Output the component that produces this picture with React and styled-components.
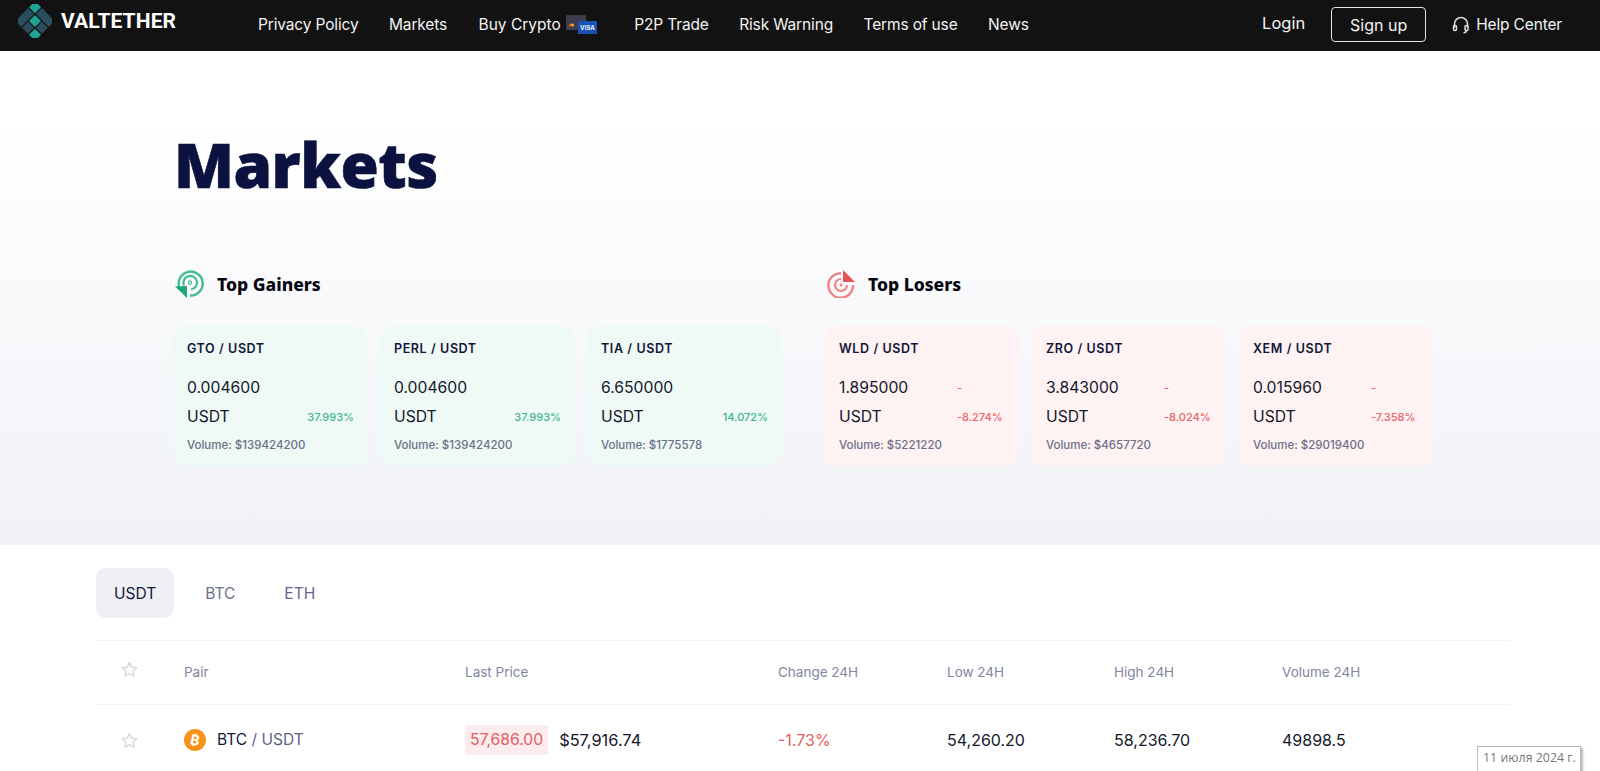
import React from "react";
import styled, { createGlobalStyle } from "styled-components";

const Global = createGlobalStyle`
  html, body { margin: 0; padding: 0; background: #fff; }
  body { font-family: Inter, "Liberation Sans", sans-serif; overflow: hidden; }
  * { box-sizing: border-box; }
`;
const Page = styled.div`position: relative; height: 771px; overflow: hidden;`;
const Header = styled.header`
  height: 51px; background: #121212; display: flex; align-items: center; color: #f2f2f2;
  padding: 0 38px 2px 18px; font-size: 15.5px;
`;
const Brand = styled.div`display: flex; align-items: center; gap: 9px; width: 240px; margin-top: -7px;`;
const BrandName = styled.span`font: 700 21px Roboto, sans-serif; color: #fff; letter-spacing: .1px;`;
const Nav = styled.nav`display: flex; align-items: center; gap: 30.5px; flex: 1; font: 400 15.5px Inter, sans-serif;`;
const NavItem = styled.a`display: flex; align-items: center; gap: 5px; white-space: nowrap; letter-spacing: -.15px;`;
const BuyItem = styled(NavItem)`margin-left: 1px; letter-spacing: 0; margin-right: 7px;`;
const Actions = styled.div`display: flex; align-items: center;`;
const Login = styled.a`font-size: 16.5px; margin-right: 26px; margin-top: -3px;`;
const SignUp = styled.a`
  width: 95px; height: 35px; border: 1px solid #e4e4e4; border-radius: 4px; display: flex;
  align-items: center; justify-content: center; font-size: 16px; margin-right: 26px;
`;
const Help = styled.a`display: flex; align-items: center; gap: 6px; font-size: 15.5px; letter-spacing: -.15px;`;

const Hero = styled.section`
  height: 494px; padding: 71px 0 0 173px;
  background: linear-gradient(180deg, #ffffff 14%, #f1f2f7 100%);
`;
const Title = styled.h1`
  margin: 0 0 64px 1px; font: 900 62px/84px "Noto Sans", sans-serif; color: #0b1240;
  letter-spacing: -.5px; -webkit-text-stroke: .6px #0b1240;
`;
const Groups = styled.div`display: flex; gap: 44px;`;
const Group = styled.div`width: 608px;`;
const GroupHead = styled.div`
  display: flex; align-items: center; gap: 13px; height: 28px; margin-bottom: 28px; padding-left: 2px;
`;
const GroupTitle = styled.h2`margin: 0; font: 800 17.5px "Noto Sans", sans-serif; color: #05060f;`;
const Cards = styled.div`display: grid; grid-template-columns: repeat(3, 194px); gap: 13px;`;
const Card = styled.div`
  height: 140px; border-radius: 12px; padding: 15px 13px 0 14px;
  background: ${p => (p.$up ? "#eff9f5" : "#fef2f3")};
`;
const CardPair = styled.div`font: 600 12.5px/16px Inter, sans-serif; color: #12163a; letter-spacing: .6px; margin-bottom: 16px;`;
const Quote = styled.div`
  display: grid; grid-template-columns: 118px 1fr; grid-auto-rows: 29px; align-items: center;
  font: 400 15.7px Inter, sans-serif; color: #14172c;
`;
const Change = styled.span`
  font: 500 11px Inter, sans-serif; color: ${p => (p.$up ? "#3fb68b" : "#e8636a")};
  text-align: ${p => (p.$up ? "right" : "left")};
`;
const Volume = styled.div`font: 500 11.5px Inter, sans-serif; color: #6c7088; margin-top: 7px;`;

const Market = styled.section`padding: 23px 90px 0 96px;`;
const Tabs = styled.div`display: flex; gap: 13px; margin-bottom: 22px;`;
const Tab = styled.button`
  height: 50px; padding: 0 18px; border: 0; border-radius: 10px; font: 400 15.5px Inter, sans-serif;
  background: ${p => (p.$active ? "#eef0f6" : "transparent")};
  color: ${p => (p.$active ? "#14193a" : p.$color)};
`;
const Row = styled.div`
  display: grid; grid-template-columns: 63px 281px 313px 169px 167px 168px 1fr; align-items: center;
  height: ${p => (p.$head ? "64px" : "70px")}; border-top: 1px solid #f3f4f7; padding-left: 25px;
`;
const StarSlot = styled.span`display: flex; margin-bottom: ${p => (p.$head ? "7px" : "0")};`;
const Head = styled.span`font: 400 13.5px Inter, sans-serif; color: #7f86a0; margin-bottom: 1px;`;
const PairCell = styled.div`display: flex; align-items: center; gap: 11px; font-size: 15.5px; color: #14193a;`;
const Quoted = styled.span`color: #5b6289;`;
const PriceCell = styled.div`display: flex; align-items: center; gap: 11px; font-size: 16.4px; color: #14172c;`;
const Flash = styled.span`
  height: 30px; padding: 0 5px; display: flex; align-items: center; background: #fdeced; color: #e35d62; font-size: 15.7px;
`;
const Neg = styled.span`font-size: 16px; color: #e35d62;`;
const Num = styled.span`font-size: 16px; color: #14172c;`;
const DateTip = styled.div`
  position: absolute; left: 1477px; top: 746px; width: 104px; height: 30px; background: #fff;
  border: 1px solid #b9b9b9; box-shadow: 2px 2px 2px #bbb; padding: 2px 0 0 5px;
  font: 400 12.4px "Open Sans", sans-serif; color: #777; white-space: nowrap;
`;

const Logo = () => (
  <svg width="34" height="34" viewBox="0 0 34 34">
    <g transform="rotate(45 17 17)">
      <rect x="3" y="3" width="8.5" height="8.5" fill="#1ea597" />
      <rect x="12.7" y="12.7" width="8.5" height="8.5" fill="#1ea597" />
      <rect x="22.5" y="22.500" width="8.5" height="8.5" fill="#1ea597" />
      <rect x="12.7" y="3" width="18.3" height="8.5" fill="#2b4d60" />
      <rect x="22.5" y="12.7" width="8.5" height="8.5" fill="#2b4d60" />
      <rect x="3" y="12.7" width="8.5" height="18.3" fill="#2b4d60" />
      <rect x="12.7" y="22.5" width="8.5" height="8.5" fill="#2b4d60" />
    </g>
  </svg>
);
const CardsIcon = () => (
  <svg width="31" height="20" viewBox="0 0 31 20">
    <rect x="0" y="0" width="20" height="15" rx="1" fill="#3b3e4d" />
    <circle cx="4.5" cy="10" r="1.6" fill="#e4572e" />
    <circle cx="6.5" cy="10" r="1.6" fill="#f5a623" />
    <rect x="12" y="6" width="19" height="13" fill="#1a4fb5" />
    <text x="21.5" y="15" textAnchor="middle" fontSize="6" fontWeight="800" fill="#dfe8fa" fontFamily="Inter">VISA</text>
  </svg>
);
const Headset = () => (
  <svg width="18" height="18" viewBox="0 0 18 18" fill="none" stroke="#dcdcdc" strokeWidth="1.5">
    <path d="M2.5 12V8a6.5 6.500 0 0 1 13 0v4" />
    <rect x="1.5" y="9.5" width="3" height="5" rx="1.2" />
    <rect x="13" y="9.5" width="3" height="5" rx="1.2" />
    <path d="M14.5 14.5c0 1.5-1 2.2-3 2.2" />
  </svg>
);
const GainIcon = () => (
  <svg width="29" height="28" viewBox="0 0 29 28" fill="none">
    <path d="M5 19A12 12 0 1 1 15 25.500" stroke="#42bd93" strokeWidth="2.4" />
    <path d="M9 15.500A6.800 6.800 0 1 1 16 19.500" stroke="#42bd93" strokeWidth="2.2" />
    <circle cx="15" cy="12.500" r="1.600" stroke="#42bd93" strokeWidth="1.2" />
    <path d="M0 16.500L12 16v12z" fill="#1fa873" />
  </svg>
);
const LoseIcon = () => (
  <svg width="28" height="28" viewBox="0 0 28 28" fill="none">
    <path d="M14 3.200A12.300 12.300 0 1 0 26 15" stroke="#ef8489" strokeWidth="2.4" />
    <path d="M14 9A6 6 0 1 0 20 15" stroke="#ef8489" strokeWidth="2.2" />
    <circle cx="14" cy="15" r="1.5" fill="#ef8489" />
    <path d="M16 0L28 12H16z" fill="#e4545a" />
  </svg>
);
const Star = () => (
  <svg width="17" height="16" viewBox="0 0 24 23" fill="none" stroke="#d5d8e2" strokeWidth="2" strokeLinejoin="round">
    <path d="M12 2l3 6.800 7.400.8-5.500 5 1.600 7.300L12 18.200l-6.500 3.700L7.100 14.600l-5.500-5 7.400-.8z" />
  </svg>
);
const BtcCoin = () => (
  <svg width="22" height="22" viewBox="0 0 22 22">
    <circle cx="11" cy="11" r="11" fill="#f7931a" />
    <text x="11" y="16" textAnchor="middle" fontSize="14" fontWeight="700" fill="#fff" fontFamily="Inter" transform="rotate(12 11 11)">₿</text>
  </svg>
);

const gainers = [
  ["GTO / USDT", "0.004600", "37.993%", "$139424200"],
  ["PERL / USDT", "0.004600", "37.993%", "$139424200"],
  ["TIA / USDT", "6.650000", "14.072%", "$1775578"],
];
const losers = [
  ["WLD / USDT", "1.895000", "-8.274%", "$5221220"],
  ["ZRO / USDT", "3.843000", "-8.024%", "$4657720"],
  ["XEM / USDT", "0.015960", "-7.358%", "$29019400"],
];

const TickerCard = ({ data, up }) => (
  <Card $up={up}>
    <CardPair>{data[0]}</CardPair>
    <Quote>
      <span>{data[1]}</span>
      {up ? <span /> : <Change>-</Change>}
      <span>USDT</span>
      <Change $up={up}>{data[2]}</Change>
    </Quote>
    <Volume>Volume: {data[3]}</Volume>
  </Card>
);

export default function App() {
  return (
    <Page>
      <Global />
      <Header>
        <Brand><Logo /><BrandName>VALTETHER</BrandName></Brand>
        <Nav>
          <NavItem>Privacy Policy</NavItem>
          <NavItem>Markets</NavItem>
          <BuyItem>Buy Crypto <CardsIcon /></BuyItem>
          <NavItem>P2P Trade</NavItem>
          <NavItem>Risk Warning</NavItem>
          <NavItem>Terms of use</NavItem>
          <NavItem>News</NavItem>
        </Nav>
        <Actions>
          <Login>Login</Login>
          <SignUp>Sign up</SignUp>
          <Help><Headset />Help Center</Help>
        </Actions>
      </Header>
      <Hero>
        <Title>Markets</Title>
        <Groups>
          <Group>
            <GroupHead><GainIcon /><GroupTitle>Top Gainers</GroupTitle></GroupHead>
            <Cards>{gainers.map(d => <TickerCard key={d[0]} data={d} up />)}</Cards>
          </Group>
          <Group>
            <GroupHead><LoseIcon /><GroupTitle>Top Losers</GroupTitle></GroupHead>
            <Cards>{losers.map(d => <TickerCard key={d[0]} data={d} />)}</Cards>
          </Group>
        </Groups>
      </Hero>
      <Market>
        <Tabs>
          <Tab $active>USDT</Tab>
          <Tab $color="#6f7389">BTC</Tab>
          <Tab $color="#6d5f8d">ETH</Tab>
        </Tabs>
        <Row $head>
          <StarSlot $head><Star /></StarSlot><Head>Pair</Head><Head>Last Price</Head><Head>Change 24H</Head>
          <Head>Low 24H</Head><Head>High 24H</Head><Head>Volume 24H</Head>
        </Row>
        <Row>
          <StarSlot><Star /></StarSlot>
          <PairCell><BtcCoin /><span>BTC <Quoted>/ USDT</Quoted></span></PairCell>
          <PriceCell><Flash>57,686.00</Flash>$57,916.74</PriceCell>
          <Neg>-1.73%</Neg>
          <Num>54,260.20</Num>
          <Num>58,236.70</Num>
          <Num>49898.5</Num>
        </Row>
      </Market>
      <DateTip>11 июля 2024 г.</DateTip>
    </Page>
  );
}
